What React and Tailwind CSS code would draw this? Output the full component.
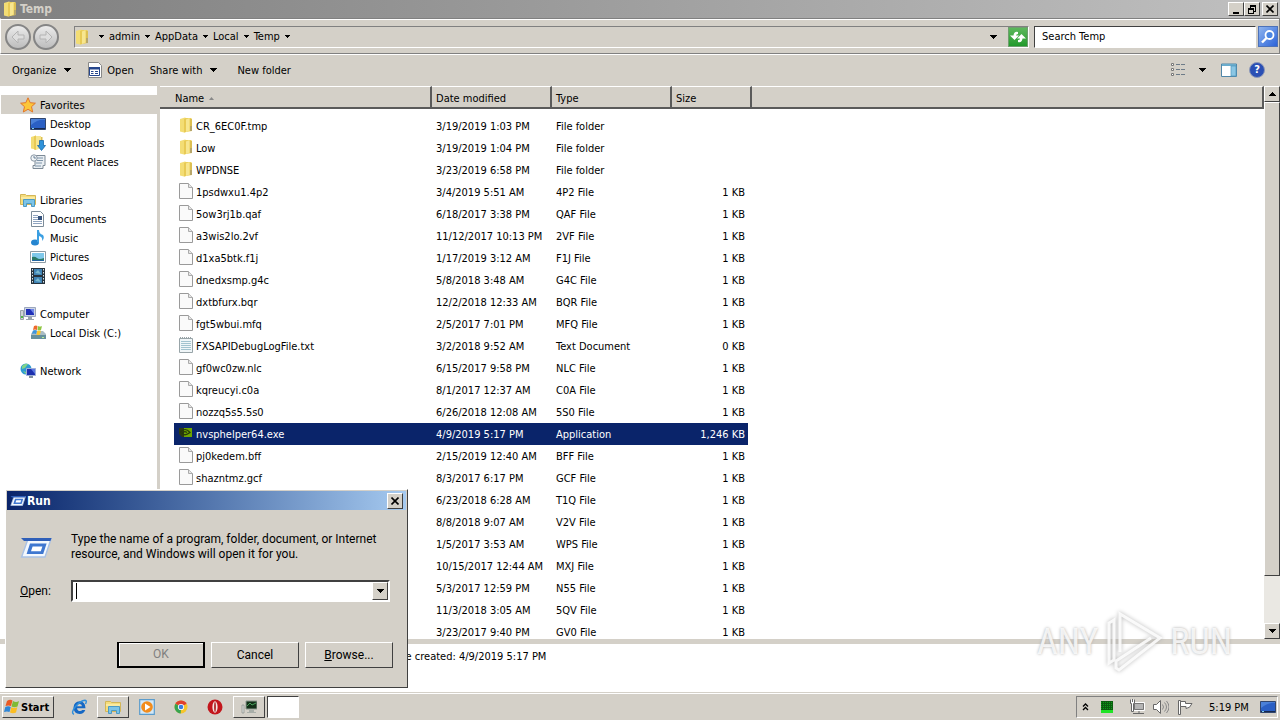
import clsx from 'clsx'

const bevel = 'border border-t-white border-l-white border-r-[#404040] border-b-[#404040] bg-[#d4d0c8]'
const sunken = 'border border-t-[#808080] border-l-[#808080] border-r-white border-b-white'

const files = [
  ['folder', 'CR_6EC0F.tmp', '3/19/2019 1:03 PM', 'File folder', ''],
  ['folder', 'Low', '3/19/2019 1:04 PM', 'File folder', ''],
  ['folder', 'WPDNSE', '3/23/2019 6:58 PM', 'File folder', ''],
  ['file', '1psdwxu1.4p2', '3/4/2019 5:51 AM', '4P2 File', '1 KB'],
  ['file', '5ow3rj1b.qaf', '6/18/2017 3:38 PM', 'QAF File', '1 KB'],
  ['file', 'a3wis2lo.2vf', '11/12/2017 10:13 PM', '2VF File', '1 KB'],
  ['file', 'd1xa5btk.f1j', '1/17/2019 3:12 AM', 'F1J File', '1 KB'],
  ['file', 'dnedxsmp.g4c', '5/8/2018 3:48 AM', 'G4C File', '1 KB'],
  ['file', 'dxtbfurx.bqr', '12/2/2018 12:33 AM', 'BQR File', '1 KB'],
  ['file', 'fgt5wbui.mfq', '2/5/2017 7:01 PM', 'MFQ File', '1 KB'],
  ['text', 'FXSAPIDebugLogFile.txt', '3/2/2018 9:52 AM', 'Text Document', '0 KB'],
  ['file', 'gf0wc0zw.nlc', '6/15/2017 9:58 PM', 'NLC File', '1 KB'],
  ['file', 'kqreucyi.c0a', '8/1/2017 12:37 AM', 'C0A File', '1 KB'],
  ['file', 'nozzq5s5.5s0', '6/26/2018 12:08 AM', '5S0 File', '1 KB'],
  ['nvidia', 'nvsphelper64.exe', '4/9/2019 5:17 PM', 'Application', '1,246 KB'],
  ['file', 'pj0kedem.bff', '2/15/2019 12:40 AM', 'BFF File', '1 KB'],
  ['file', 'shazntmz.gcf', '8/3/2017 6:17 PM', 'GCF File', '1 KB'],
  ['file', '', '6/23/2018 6:28 AM', 'T1Q File', '1 KB'],
  ['file', '', '8/8/2018 9:07 AM', 'V2V File', '1 KB'],
  ['file', '', '1/5/2017 3:53 AM', 'WPS File', '1 KB'],
  ['file', '', '10/15/2017 12:44 AM', 'MXJ File', '1 KB'],
  ['file', '', '5/3/2017 12:59 PM', 'N55 File', '1 KB'],
  ['file', '', '11/3/2018 3:05 AM', '5QV File', '1 KB'],
  ['file', '', '3/23/2017 9:40 PM', 'GV0 File', '1 KB'],
]

const places = [
  { icon: 'star', label: 'Favorites', items: [['desktop', 'Desktop'], ['downloads', 'Downloads'], ['recent', 'Recent Places']] },
  { icon: 'libraries', label: 'Libraries', items: [['document', 'Documents'], ['music', 'Music'], ['picture', 'Pictures'], ['video', 'Videos']] },
  { icon: 'computer', label: 'Computer', items: [['disk', 'Local Disk (C:)']] },
  { icon: 'network', label: 'Network', items: [] },
]

const drawings = {
  folder: (
    <>
      <path d="M1 2l5-1.500 1 .5v14l-2 .5-4-1z" fill="#f3dd74" />
      <path d="M5 2l2-1v14l-2 .5z" fill="#e8ca55" />
      <path d="M7 1h5l1 1v12l-6 1z" fill="#ecd05c" />
      <path d="M7 2.500L10.500 1v12.500L7 15z" fill="#f7e690" />
      <path d="M11 2h2v7h-2z" fill="#dcbf52" />
      <path d="M11 9h2v5h-2z" fill="#b7a66a" />
    </>
  ),
  file: (
    <>
      <path d="M.5.5h9l4 4v11H.5z" fill="#fafafa" stroke="#9a9a9a" />
      <path d="M9.500.5v4h4" fill="#e6e6e6" stroke="#ababab" />
    </>
  ),
  text: (
    <>
      <path d="M.5 1.500h13v14H.5z" fill="#f0f6f8" stroke="#98a4a8" />
      <path d="M2 4.500h10M2 6.500h10M2 8.500h10M2 10.500h10M2 12.500h10" stroke="#a3c3cf" />
      <path d="M1 .5h12" stroke="#9aa4a8" strokeDasharray="1 1" />
    </>
  ),
  nvidia: (
    <>
      <path d="M0 3h7v9H3L0 9z" fill="#2d3a10" />
      <path d="M5 3h8v9H5z" fill="#6ea500" />
      <path d="M1 7.500q5-6 10 0-5 4-8 1 2-3 5-1" fill="none" stroke="#24380a" strokeWidth="1.200" />
    </>
  ),
  star: <path d="M8 .8l2.200 4.900 5.200.5-3.900 3.500 1.200 5.300L8 12.300 3.300 15l1.200-5.300L.6 6.200l5.200-.5z" fill="#fcc63a" stroke="#e2762a" />,
  desktop: (
    <>
      <path d="M.5 2.500h15v11H.5z" fill="#2a5fc4" stroke="#31466e" />
      <path d="M1 9q7-6 14-5V3H1z" fill="#4a80d8" />
      <path d="M1 12h14v1H1z" fill="#16284e" />
      <path d="M2 12h2v1H2z" fill="#7fd0f0" />
    </>
  ),
  downloads: (
    <>
      <path d="M1 2l5-1.500v14l-5-1z" fill="#f3dd74" />
      <path d="M4 1.500l2-1V15l-2-.5z" fill="#e8ca55" />
      <path d="M6 1h5v12l-5 2z" fill="#f7e690" />
      <path d="M11 2h1.500v6H11z" fill="#dcbf52" />
      <path d="M9.500 5.500h4v5h2l-4 5-4-5h2z" fill="#2e92da" stroke="#1767a8" strokeWidth=".8" />
    </>
  ),
  recent: (
    <>
      <path d="M5 1.500h10v10h-2v3H3v-3h2z" fill="#e9eef2" stroke="#7d8a96" />
      <path d="M7 4h6M7 6.500h6M6 9h6M5 12h6" stroke="#7f95aa" />
      <circle cx="4" cy="4" r="3.200" fill="#f2f6f8" stroke="#8b98a5" />
      <path d="M4 2v2h2" fill="none" stroke="#4d6880" strokeWidth=".8" />
    </>
  ),
  libraries: (
    <>
      <path d="M.5 2.500h5l1 1h9v9H.5z" fill="#f5dd7d" stroke="#d3b658" />
      <path d="M1 6h14" stroke="#fff6c4" />
      <path d="M3.500 7.500h11v7h-3v-3h-5v3h-3z" fill="#7cc4e8" stroke="#4c9ac4" />
    </>
  ),
  document: (
    <>
      <path d="M1.500.5h9l3 3v12h-12z" fill="#fff" stroke="#7d8c99" />
      <path d="M3 4.500h5M3 6.500h5M3 8.500h9M3 10.500h9M3 12.500h9" stroke="#8fa4c0" />
      <path d="M8 5h4v4H8z" fill="#34517c" />
    </>
  ),
  music: (
    <>
      <ellipse cx="5" cy="12.500" rx="4" ry="3" fill="#2585d0" />
      <path d="M7 12V0h2q0 4 4 5 2 3-1 6 1-4-3-5v7z" fill="#3b9fe2" />
    </>
  ),
  picture: (
    <>
      <path d="M.5 2.500h15v11H.5z" fill="#fff" stroke="#8d9ba4" />
      <path d="M2 4h12v8H2z" fill="#7fc8ea" />
      <path d="M2 8q3-1 5 1t7 0v3H2z" fill="#2b7a67" />
      <path d="M2 11h12v1H2z" fill="#2165a0" />
    </>
  ),
  video: (
    <>
      <path d="M1 0h14v16H1z" fill="#26333d" />
      <path d="M4 1h8v6H4zM4 9h8v6H4z" fill="#3f83b5" />
      <path d="M5 5l3-3 3 4zM5 13l3-3 3 4z" fill="#79b9cf" />
      <path d="M2.500 1v14M13.500 1v14" stroke="#dbe6ec" strokeDasharray="1.500 1.500" />
    </>
  ),
  computer: (
    <>
      <path d="M.5 4.500h3v9h-3z" fill="#cfd4d8" stroke="#9aa2a8" />
      <path d="M1 10h2v2H1z" fill="#52b948" />
      <path d="M4.500 1.500h11v9h-11z" fill="#cdd5e4" stroke="#9ba6bd" />
      <path d="M6 3h8v6H6z" fill="#2030b8" />
      <path d="M10 3h4v5z" fill="#6f86e8" />
      <path d="M8 11h4v2h2v1H6v-1h2z" fill="#99a3ad" />
    </>
  ),
  disk: (
    <>
      <path d="M1 9l2-3h10l3 3v5H1z" fill="#a9bcc4" />
      <path d="M1 10h15v4H1z" fill="#66909d" />
      <path d="M12 12h2v1h-2z" fill="#b8f090" />
      <path d="M4 1q2-1 3.500 0L7 5Q5 4 3 5z" fill="#ee6a2c" />
      <path d="M8 1q2 1 4 0l-1 4q-2 1-3.500 0z" fill="#8fc641" />
      <path d="M3 5.500q2-1 4 0L6 9Q4 8 2 9z" fill="#3d95dc" />
      <path d="M7.500 5.500q2 1 3.500 0l-1 4q-2 1-3.500 0z" fill="#fbc52e" />
    </>
  ),
  network: (
    <>
      <circle cx="6" cy="6" r="5.500" fill="#2f9bd2" />
      <path d="M2 3q3-3 6-2l-3 4-3 1zM3 8l3 1v2z" fill="#7fd488" />
      <path d="M6.500 5.500h9v7h-9z" fill="#1c2fae" stroke="#9fb0d8" />
      <path d="M11 6h4v5z" fill="#5b78e2" />
      <path d="M9 13h4v2H9z" fill="#8290a0" />
    </>
  ),
  app: (
    <>
      <path d="M1.500.5h10l3 3v12h-13z" fill="#fff" stroke="#888" />
      <path d="M2.500 5.500h10v8h-10z" fill="#fff" stroke="#26468c" />
      <path d="M2 5h11v2.500H2z" fill="#26468c" />
      <path d="M4 9.500h2.500M4 11.500h2.500M8 9.500h3M8 11.500h3" stroke="#26468c" />
    </>
  ),
  run: (
    <>
      <path d="M4 3.500h11.500l-3 9H.8z" fill="#f4f8fd" stroke="#a9c1e4" strokeWidth=".7" />
      <path d="M.5 3h15.300l-.6 1.500H2z" fill="#2f5fb8" />
      <path d="M5 5.800h8.300L11.600 11H3.300z" fill="#3f77d0" />
      <path d="M6.300 7.200h4.900l-.8 2.400H5.500z" fill="#fff" />
    </>
  ),
  flag: (
    <>
      <path d="M3 2q3-2 5.500-.5L7 7Q4.500 6 1.500 7z" fill="#ea5a24" />
      <path d="M9 2q3 2 6 0l-1.500 5.500q-3 1.500-6 0z" fill="#7fba35" />
      <path d="M1.300 8q3-1.500 5.500 0L5.500 13Q3 12 0 13z" fill="#2f86d6" />
      <path d="M7.300 8.200q3 1.500 6 0L12 13.500q-3 1.500-6 0z" fill="#fbbd22" />
    </>
  ),
  ie: (
    <>
      <path d="M14.500 9.200H6q.5 2.800 3 2.800 1.500 0 2.300-1.100h3Q12.700 15 8.800 15 2.500 14.500 2.500 8.500 3 2.500 8.800 2.300q5.700.4 5.700 6.900zM6 7.200h5Q10.700 5 8.600 5 6.500 5 6 7.200z" fill="#1668c4" fillRule="evenodd" />
      <path d="M3 15.300Q-.5 14 4.500 7.500q5-6 9.500-6.300Q16.300 1.300 14.500 5" fill="none" stroke="#2f8fdc" strokeWidth="1.400" />
    </>
  ),
  player: (
    <>
      <path d="M.7.7h14.600v14.600H.7z" fill="#d3e8f7" stroke="#5b9ccc" strokeWidth="1.200" />
      <circle cx="8" cy="8" r="5.800" fill="#f28c1c" />
      <path d="M6 4.500L11.500 8 6 11.500z" fill="#fff" />
    </>
  ),
  chrome: (
    <>
      <circle cx="8" cy="8" r="6.500" fill="#f6c52b" />
      <path d="M8 8L2.400 4.700A6.500 6.500 0 0 1 13.600 4.700z" fill="#e0402f" />
      <path d="M8 8L2.400 4.700A6.500 6.500 0 0 0 7.700 14.500z" fill="#37a350" />
      <circle cx="8" cy="8" r="3.100" fill="#fff" />
      <circle cx="8" cy="8" r="2.300" fill="#3b7de0" />
    </>
  ),
  opera: (
    <>
      <circle cx="8" cy="8" r="7.500" fill="#c3161c" />
      <ellipse cx="8" cy="8" rx="2.600" ry="5.800" fill="#f5e6e3" />
      <ellipse cx="8" cy="8" rx="1" ry="5" fill="#b43b3a" />
    </>
  ),
  monitor: (
    <>
      <path d="M5 2h11v8H5z" fill="#123018" stroke="#8c9a90" />
      <path d="M6 7l3-3 2 2 4-2" fill="none" stroke="#4aa05c" />
      <path d="M1 6h2v8H1z" fill="#d9dcd9" stroke="#7d847f" strokeWidth=".6" />
      <path d="M8 11h5v2H8zM6 13h9v1H6z" fill="#a8aea9" />
    </>
  ),
  meter: (
    <>
      <path d="M2 2h12v12H2z" fill="#0b5c10" />
      <path d="M2 3.500h12M2 5.500h12M2 7.500h12M2 9.500h12" stroke="#0f9a1a" strokeDasharray="1 1" />
      <path d="M2 11h12v3H2z" fill="#1fe326" />
    </>
  ),
  plug: (
    <>
      <path d="M4.500 3.500h11v8h-11z" fill="#b5b5b5" stroke="#fff" />
      <path d="M5.500 4.500h9v6h-9z" fill="none" stroke="#777" />
      <path d="M4 14.500h11M10 12v2" stroke="#666" />
      <path d="M1.500.5v4h1v8h2v-8h1v-4M3.500 0v3" fill="#fff" stroke="#666" />
    </>
  ),
  speaker: (
    <>
      <path d="M.5 5.500h3l4-4v13l-4-4h-3z" fill="#fff" stroke="#666" />
      <path d="M9.500 5.500q2 2.500 0 5M11.500 3.500q4 4.500 0 9M13.500 2q5 6 0 12" fill="none" stroke="#888" />
    </>
  ),
  whiteflag: (
    <>
      <path d="M1.500 1.500h2v14h-2z" fill="#fff" stroke="#666" />
      <path d="M3.500 2.500h5v2h6.500q-2 5-6 5v-2H3.500z" fill="#fff" stroke="#666" />
    </>
  ),
  views: (
    <>
      <path d="M1.500 1.500h2v2h-2zM1.500 6.500h2v2h-2zM1.500 11.500h2v2h-2z" fill="#fff" stroke="#777" />
      <path d="M6 2.500h4M11 2.500h4M6 7.500h4M11 7.500h4M6 12.500h4M11 12.500h4" stroke="#6d7b88" />
    </>
  ),
  preview: (
    <>
      <path d="M.5 2h15v12.500H.5z" fill="#fff" stroke="#4f86a8" />
      <path d="M1 2h14v2H1z" fill="#6aaccc" />
      <path d="M10 4h5v10h-5z" fill="#8ac6e4" stroke="#4f96bc" strokeWidth=".7" />
    </>
  ),
}

function Icon({ name, size = 'size-4' }) {
  return (
    <svg viewBox="0 0 16 16" className={clsx('shrink-0', size)} aria-hidden="true">
      {drawings[name]}
    </svg>
  )
}

function Caret({ up = false }) {
  return (
    <svg viewBox="0 0 7 4" className="w-[7px] h-1 shrink-0" shapeRendering="crispEdges" aria-hidden="true">
      <path d={up ? 'M0 4h7L3.500 0z' : 'M0 0h7L3.500 4z'} />
    </svg>
  )
}

function SmallCaret() {
  return (
    <svg viewBox="0 0 5 3" className="w-[5px] h-[3px] shrink-0" shapeRendering="crispEdges" aria-hidden="true">
      <path d="M0 0h5L2.500 3z" />
    </svg>
  )
}

function Cross() {
  return (
    <svg viewBox="0 0 8 8" className="size-2" aria-hidden="true">
      <path d="M.5.5l7 7M7.500.5l-7 7" stroke="#000" strokeWidth="1.600" />
    </svg>
  )
}

function TitleBar() {
  return (
    <header className="h-[18px] shrink-0 flex items-center bg-linear-to-r from-[#808080] to-[#c0c0c0] pl-[3px] pr-0.5">
      <Icon name="folder" />
      <h1 className="ml-px font-bold text-[12px] text-[#d4d0c8]">Temp</h1>
      <span className="flex-1" />
      <button aria-label="Minimize" className={clsx(bevel, 'w-4 h-3.5 flex items-end justify-center pb-px')}>
        <span className="w-1.5 h-0.5 bg-black" />
      </button>
      <button aria-label="Restore" className={clsx(bevel, 'w-4 h-3.5 flex items-center justify-center')}>
        <svg viewBox="0 0 10 10" className="size-2.5" shapeRendering="crispEdges">
          <path d="M3 1h6v2H3zM1 4h6v2H1z" />
          <path d="M3.500 1v3M8.500 2v5H7M1.500 5v4.500h5V5" fill="none" stroke="#000" />
        </svg>
      </button>
      <button aria-label="Close" className={clsx(bevel, 'ml-0.5 w-4 h-3.5 flex items-center justify-center')}>
        <Cross />
      </button>
    </header>
  )
}

function NavButton({ label, path }) {
  return (
    <button aria-label={label} className="size-[26px] rounded-full border-2 border-[#858585] bg-linear-to-b from-[#ececec] to-[#bdbdbd] flex items-center justify-center">
      <svg viewBox="0 0 16 16" className="size-4">
        <path d={path} fill="#dedede" stroke="#b4b4b4" />
      </svg>
    </button>
  )
}

function AddressBar() {
  return (
    <div className="h-9 shrink-0 flex items-center border border-t-[#808080] border-l-white border-r-[#808080] border-b-[#808080] pt-px pl-1 pr-px shadow-[inset_0_1px_white,0_1px_white]">
      <div className="flex gap-0.5">
        <NavButton label="Back" path="M8 2L2 8l6 6v-4h6V6H8z" />
        <NavButton label="Forward" path="M8 2l6 6-6 6v-4H2V6h6z" />
      </div>
      <nav className={clsx(sunken, 'ml-[15px] flex-1 h-[22px] flex items-center')}>
        <Icon name="folder" />
        <span className="ml-2 flex items-center gap-[5px]">
          {['', 'admin', 'AppData', 'Local', 'Temp'].map((crumb) => (
            <span key={crumb} className="flex items-center gap-[5px]">
              {crumb && <a href="#crumb">{crumb}</a>}
              <SmallCaret />
            </span>
          ))}
        </span>
        <span className="flex-1" />
        <button aria-label="Previous locations" className="w-[30px] flex justify-center"><Caret /></button>
        <button aria-label="Refresh" className="size-5 border border-[#6f9e6f] bg-linear-to-b from-[#5cb85c] to-[#1f9a2a] flex items-center justify-center">
          <svg viewBox="0 0 16 16" className="size-4">
            <path d="M8 3Q4 2 3.500 6.500H0L4.500 11 9 6.500H6Q6 5 8 5zM8 13q4 1 4.500-3.500H16L11.500 5 7 9.500h3Q10 11 8 11z" fill="#fff" />
          </svg>
        </button>
      </nav>
      <input aria-label="Search" placeholder="Search Temp" className="ml-[5px] w-[222px] h-[22px] bg-white border border-t-[#404040] border-l-[#404040] border-r-white border-b-white px-[7px] placeholder:text-black outline-none" />
      <button aria-label="Go" className="ml-0.5 w-5 h-[21px] bg-linear-to-br from-[#8fb4ee] to-[#2d62d8] border border-[#4d72b8] flex items-center justify-center">
        <svg viewBox="0 0 16 16" className="size-4">
          <circle cx="9.500" cy="6" r="4" fill="#4b86e2" stroke="#fff" strokeWidth="1.800" />
          <path d="M6.500 9L2 13.500" stroke="#fff" strokeWidth="2.400" />
        </svg>
      </button>
    </div>
  )
}

function Toolbar() {
  return (
    <div className="h-8 shrink-0 flex items-center pl-3 pr-[15px]">
      <button className="flex items-center gap-2">Organize <Caret /></button>
      <button className="ml-4 flex items-center gap-1"><Icon name="app" /> Open</button>
      <button className="ml-4 flex items-center gap-2">Share with <Caret /></button>
      <button className="ml-5">New folder</button>
      <span className="flex-1" />
      <button aria-label="Change view"><Icon name="views" /></button>
      <button aria-label="More views" className="ml-[13px]"><Caret /></button>
      <button aria-label="Preview pane" className="ml-[15px]"><Icon name="preview" /></button>
      <button aria-label="Help" className="ml-3 size-4 rounded-full bg-[#2a4fb4] border border-[#8c98b8] text-white font-bold leading-3">?</button>
    </div>
  )
}

function Sidebar() {
  const row = 'ml-px h-[19px] flex items-center gap-1'
  return (
    <aside className="w-[157px] shrink-0 bg-white pt-[9px] overflow-hidden">
      {places.map((group, i) => (
        <section key={group.label} className="mb-[19px]">
          <a href="#place" className={clsx(row, 'pl-[19px]', i === 0 && 'bg-[#d4d0c8]')}>
            <Icon name={group.icon} /> <span className="pt-0.5">{group.label}</span>
          </a>
          {group.items.map(([icon, label]) => (
            <a key={label} href="#place" className={clsx(row, 'pl-[29px]')}>
              <Icon name={icon} /> <span className="pt-0.5">{label}</span>
            </a>
          ))}
        </section>
      ))}
    </aside>
  )
}

function FileTable() {
  const th = 'h-[23px] p-0 pt-0.5 pl-1 text-left font-normal bg-[#d4d0c8] border-t border-t-white border-b-2 border-b-[#5a5a5a] border-r-2 border-r-[#5a5a5a]'
  return (
    <div className="flex-1 min-w-0 bg-white overflow-hidden">
      <table className="w-full table-fixed border-separate border-spacing-0">
        <colgroup>
          <col className="w-3.5" />
          <col className="w-[258px]" />
          <col className="w-[120px]" />
          <col className="w-[120px]" />
          <col className="w-[76px]" />
          <col className="w-1" />
          <col />
        </colgroup>
        <thead>
          <tr>
            <th colSpan={2} className={clsx(th, 'pl-[15px]')}>
              <span className="flex items-center gap-[5px]">
                Name
                <svg viewBox="0 0 5 3" className="w-[5px] h-[3px]"><path d="M0 3h5L2.500 0z" fill="#888" /></svg>
              </span>
            </th>
            <th className={th}>Date modified</th>
            <th className={th}>Type</th>
            <th colSpan={2} className={th}>Size</th>
            <th className={th} />
          </tr>
        </thead>
        <tbody>
          <tr className="h-1.5"><td colSpan={7} className="p-0" /></tr>
          {files.map(([icon, name, date, type, size]) => {
            const td = clsx('h-[22px] p-0 whitespace-nowrap', icon === 'nvidia' && 'bg-[#0a246a] text-white')
            return (
              <tr key={date}>
                <td className="p-0" />
                <td className={td}>
                  <span className="flex items-center gap-px pl-[5px]">
                    <Icon name={icon} size="size-4 mb-0.5" /> {name}
                  </span>
                </td>
                <td className={clsx(td, 'pl-1')}>{date}</td>
                <td className={clsx(td, 'pl-1')}>{type}</td>
                <td className={clsx(td, 'pr-[3px] text-right')}>{size}</td>
                <td className="p-0" />
                <td className="p-0" />
              </tr>
            )
          })}
        </tbody>
      </table>
    </div>
  )
}

function Scrollbar() {
  return (
    <div className="w-4 shrink-0 flex flex-col bg-[#eae8e3]">
      <button aria-label="Scroll up" className={clsx(bevel, 'h-4 flex items-center justify-center')}><Caret up /></button>
      <div className="flex-1 flex flex-col">
        <div className={clsx(bevel, 'grow-[91]')} />
        <div className="grow-9" />
      </div>
      <button aria-label="Scroll down" className={clsx(bevel, 'h-4 flex items-center justify-center')}><Caret /></button>
    </div>
  )
}

function Watermark() {
  return (
    <div className="absolute right-12 bottom-[46px] flex items-center gap-1.5 text-[36px] leading-none text-white/80 [font-family:'Liberation_Sans_Narrow','Roboto_Condensed',sans-serif] [text-shadow:0_0_3px_#aaa]">
      ANY
      <svg viewBox="0 0 60 64" className="w-[60px] h-16 drop-shadow-[0_0_2px_#aaa]" aria-hidden="true">
        <path d="M16 42V4l40 24-41 32-3-2v-7l35-23M10 10l-5 3v40l5-3z" fill="none" stroke="#fff" strokeOpacity=".85" strokeWidth="3" />
      </svg>
      RUN
    </div>
  )
}

function RunDialog() {
  const button = 'w-[88px] h-[26px]'
  return (
    <section role="dialog" aria-label="Run" className={clsx(bevel, 'absolute left-[5px] bottom-8 w-[403px] h-[199px] p-px')}>
      <div className="h-[19px] flex items-center bg-linear-to-r from-[#0a246a] to-[#a6caf0] px-[3px]">
        <Icon name="run" />
        <h2 className="ml-px pt-0.5 font-bold text-[12px] text-white">Run</h2>
        <span className="flex-1" />
        <button aria-label="Close" className={clsx(bevel, 'size-4 flex items-center justify-center')}><Cross /></button>
      </div>
      <div className="[font-family:Roboto,sans-serif] text-[12px]">
        <div className="flex pt-[22px] pl-[13px]">
          <Icon name="run" size="size-8" />
          <p className="ml-[19px] leading-[15px]">
            Type the name of a program, folder, document, or Internet<br />
            resource, and Windows will open it for you.
          </p>
        </div>
        <div className="flex items-center mt-4 pl-[13px]">
          <label htmlFor="run-open" className="w-[51px]"><u>O</u>pen:</label>
          <div className="w-[319px] h-[22px] flex bg-white border-2 border-t-[#404040] border-l-[#404040] border-r-white border-b-white">
            <span className="ml-[3px] my-px w-px bg-black" />
            <input id="run-open" className="flex-1 min-w-0 outline-none" />
            <button aria-label="Show history" className={clsx(bevel, 'w-4 flex items-center justify-center')}><Caret /></button>
          </div>
        </div>
        <div className="flex justify-end gap-1.5 mt-10 pr-[13px]">
          <button disabled className={clsx(button, 'border-2 border-black border-t bg-[#d4d0c8] text-[#808080] shadow-[inset_1px_1px_white]')}>OK</button>
          <button className={clsx(bevel, button)}>Cancel</button>
          <button className={clsx(bevel, button)}><u>B</u>rowse...</button>
        </div>
      </div>
    </section>
  )
}

function Taskbar() {
  const task = 'w-8 h-[22px] flex items-center justify-center'
  return (
    <footer className="h-7 shrink-0 flex items-center gap-0.5 border-t border-t-[#d4d0c8] shadow-[inset_0_1px_white] pt-0.5 pb-px px-0.5">
      <button className={clsx(bevel, 'w-[52px] h-[22px] flex items-center gap-px pl-px font-bold')}>
        <Icon name="flag" /> Start
      </button>
      <div className="flex items-center gap-0.5 ml-[7px]">
        <button aria-label="Internet Explorer" className={task}><Icon name="ie" /></button>
        <button aria-label="Explorer" className={clsx(bevel, task)}><Icon name="libraries" /></button>
        <button aria-label="Media Player" className={task}><Icon name="player" /></button>
        <button aria-label="Chrome" className={task}><Icon name="chrome" /></button>
        <button aria-label="Opera" className={task}><Icon name="opera" /></button>
        <button aria-label="Monitor" className={clsx(bevel, task)}><Icon name="monitor" /></button>
        <button aria-label="Run" className="w-8 h-[22px] bg-white border border-t-[#404040] border-l-[#404040] border-white" />
      </div>
      <span className="flex-1" />
      <div className={clsx(sunken, 'w-[202px] h-[22px] flex items-center pl-[5px] pr-px')}>
        <button aria-label="Show hidden icons">
          <svg viewBox="0 0 7 8" className="w-[7px] h-2"><path d="M1 3.500L3.500 1 6 3.500M1 7l2.500-2.500L6 7" fill="none" stroke="#000" strokeWidth="1.300" /></svg>
        </button>
        <span className="ml-2.5"><Icon name="meter" /></span>
        <span className="ml-3.5 flex gap-2"><Icon name="plug" /><Icon name="speaker" /><Icon name="whiteflag" /></span>
        <time className="ml-4">5:19 PM</time>
        <span className="flex-1" />
        <Icon name="desktop" />
      </div>
    </footer>
  )
}

export default function App() {
  return (
    <div className="relative h-screen flex flex-col overflow-hidden bg-[#d4d0c8] text-black text-[11px] leading-[15px] [font-family:'DejaVu_Sans_Condensed','Noto_Sans',sans-serif]">
      <TitleBar />
      <AddressBar />
      <Toolbar />
      <main className="flex-1 min-h-0 flex">
        <Sidebar />
        <div className="w-[3px] shrink-0" />
        <FileTable />
        <Scrollbar />
      </main>
      <div className="mt-[5px] h-12 shrink-0 bg-white pt-[5px] pl-[388px]">
        Date created: 4/9/2019 5:17 PM
      </div>
      <Taskbar />
      <RunDialog />
      <Watermark />
    </div>
  )
}
